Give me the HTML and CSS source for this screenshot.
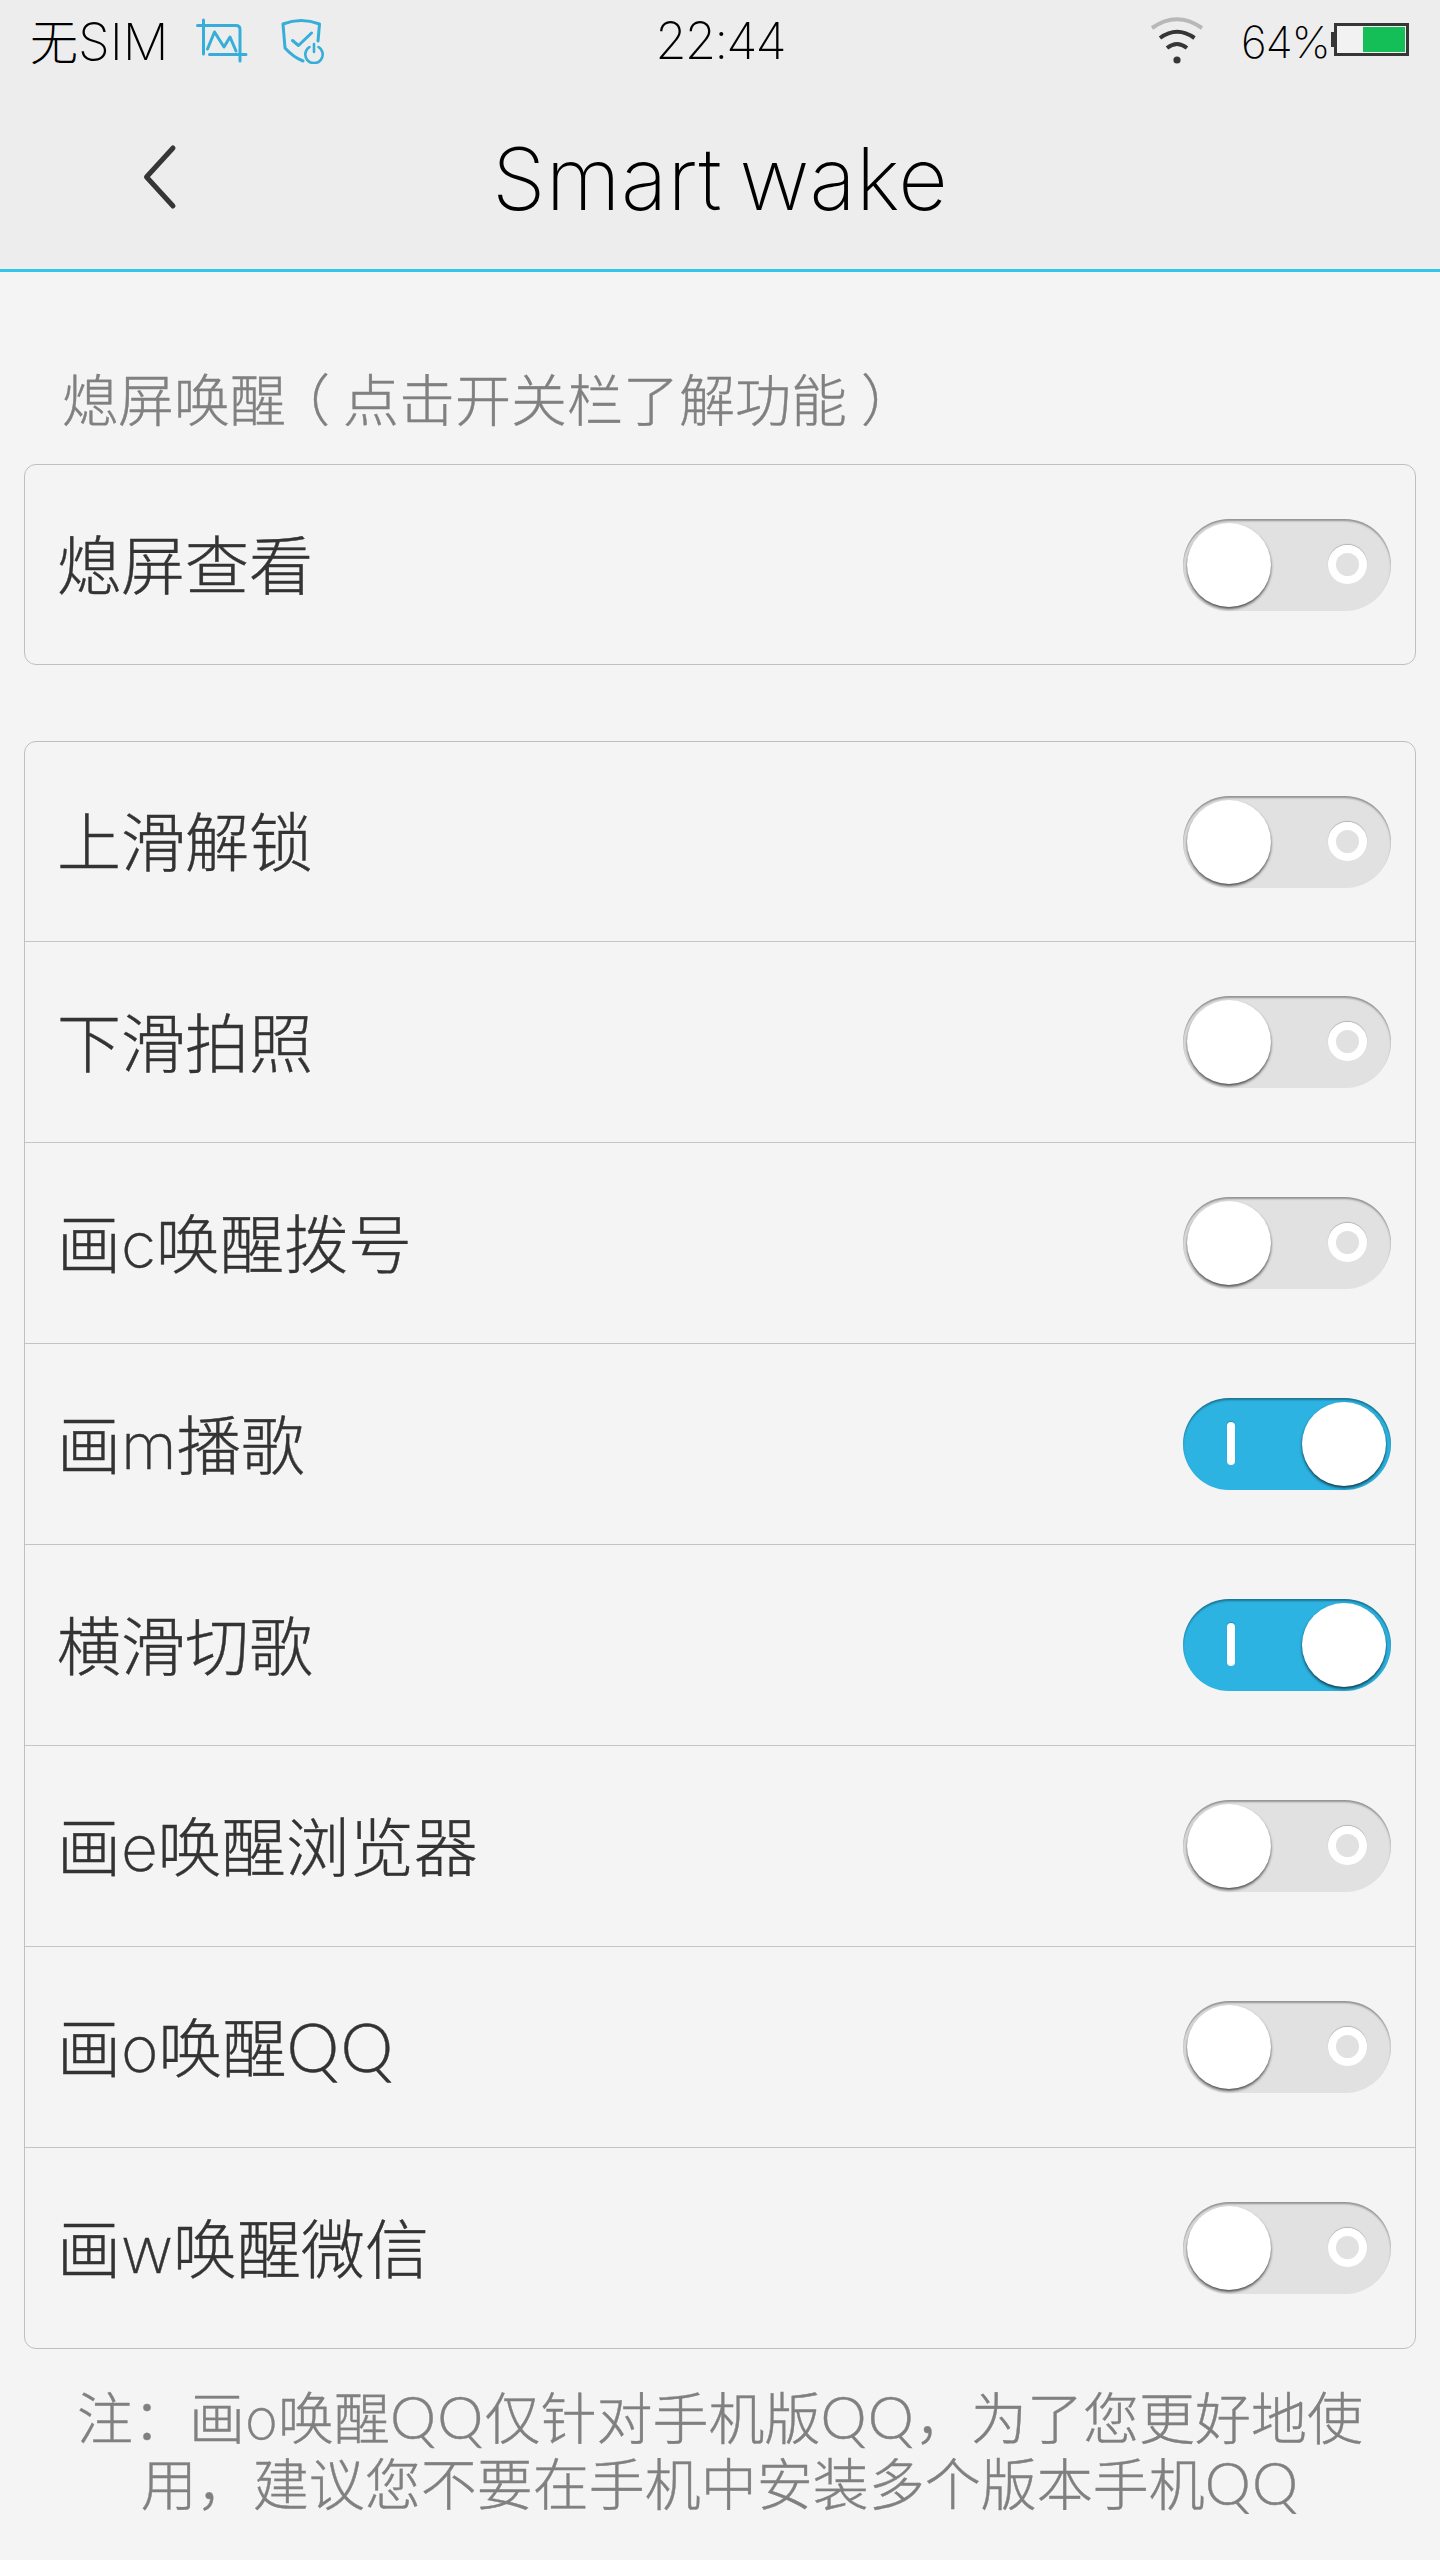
FILE: index.html
```html
<!DOCTYPE html>
<html lang="zh-CN">
<head>
  <meta charset="UTF-8">
  <meta name="viewport" content="width=device-width, initial-scale=1.0">
  <link rel="stylesheet" href="styles.css">
  <title>Smart wake</title>
</head>
<body>

<header class="header">
  <div class="status">
    <div class="status-left">
      <span class="carrier">无<span class="sim">SIM</span></span>
      <svg class="icon-crop" width="52" height="46" viewBox="0 0 52 46" fill="none" stroke="#37aeda" stroke-width="3" stroke-linecap="round" stroke-linejoin="round">
        <path d="M1.500 7.500H40q4 0 4 4V43M7.500 2V36M13.500 36.500H50M11.500 31L18.500 14L28 29L34 19L40 33"/>
      </svg>
      <svg class="icon-shield" width="44" height="46" viewBox="0 0 44 46" fill="none" stroke="#37aeda" stroke-width="3" stroke-linecap="round" stroke-linejoin="round">
        <path d="M37 23L38.500 6Q20 -1 2 6L4 30Q12 39 22 43M11.500 22.500L17.500 27.500L30.500 15"/>
        <path d="M28.500 29A8.700 8.700 0 1 0 37.500 29M33 26V34" stroke-width="2.600"/>
      </svg>
    </div>
    <div class="clock">22:44</div>
    <div class="status-right">
      <svg class="icon-wifi" width="54" height="48" viewBox="0 0 54 48" fill="none" stroke="#363636" stroke-width="4">
        <path d="M2 11Q27 -6.500 52 11" stroke="#b8b8b8"/>
        <path d="M10 21Q27 8.500 44.500 21M17 31Q27 23 37 31"/>
        <circle cx="27" cy="43" r="3.600" fill="#363636" stroke="none"/>
      </svg>
      <span class="percent">64%</span>
      <svg class="icon-battery" width="79" height="34" viewBox="0 0 79 34">
        <path d="M0 9H5V24H0z" fill="#363636"/>
        <rect x="4.500" y="1.500" width="72" height="30" fill="#f2f2f2" stroke="#363636" stroke-width="3"/>
        <path d="M32 4H74V29H32z" fill="#14bf58"/>
      </svg>
    </div>
  </div>
  <div class="titlebar">
    <svg class="back" width="36" height="66" viewBox="0 0 36 66" fill="none" stroke="#363636" stroke-width="5" stroke-linecap="round" stroke-linejoin="round">
      <path d="M32 4L5.500 33L32 62"/>
    </svg>
    <h1 class="title">Smart wake</h1>
  </div>
</header>

<main class="content">
  <h2 class="section">熄屏唤醒<span class="paren-open">（</span>点击开关栏了解功能<span class="paren-close">）</span></h2>

  <div class="card">
    <div class="row"><span>熄屏查看</span><i class="switch"></i></div>
  </div>

  <div class="card">
    <div class="row"><span>上滑解锁</span><i class="switch"></i></div>
    <div class="row"><span>下滑拍照</span><i class="switch"></i></div>
    <div class="row"><span>画<b>c</b>唤醒拨号</span><i class="switch"></i></div>
    <div class="row"><span>画<b>m</b>播歌</span><i class="switch on"></i></div>
    <div class="row"><span>横滑切歌</span><i class="switch on"></i></div>
    <div class="row"><span>画<b>e</b>唤醒浏览器</span><i class="switch"></i></div>
    <div class="row"><span>画<b>o</b>唤醒<b class="q">QQ</b></span><i class="switch"></i></div>
    <div class="row"><span>画<b>w</b>唤醒微信</span><i class="switch"></i></div>
  </div>

  <p class="note">注：画<b>o</b>唤醒<b class="q">QQ</b>仅针对手机版<b class="q">QQ</b>，为了您更好地使<br>用，建议您不要在手机中安装多个版本手机<b class="q">QQ</b></p>
</main>

</body>
</html>
```
FILE: styles.css
```css
*,
*::before,
*::after {
  box-sizing: border-box;
}

body {
  margin: 0;
  background: #f4f4f4;
  color: #333;
  font-family: "Noto Sans CJK SC", sans-serif;
  font-weight: 300;
}

.header {
  height: 272px;
  background: #ededed;
  border-bottom: 3px solid #35c5e8;
}

.status {
  display: grid;
  grid-template-columns: 1fr auto 1fr;
  height: 84px;
  padding: 0 30px;
  color: #000;
}

.status-left,
.status-right {
  display: flex;
  align-items: flex-start;
}

.status-right {
  justify-content: flex-end;
}

.carrier {
  width: 166px;
  font-size: 48px;
  line-height: 78px;
  white-space: nowrap;
}

.sim,
.clock,
.percent,
.title,
b {
  font-family: Inter, "Liberation Sans", sans-serif;
  font-weight: 200;
}

b {
  line-height: 1;
  font-weight: 250;
}

.q {
  font-family: Lato, Inter, sans-serif;
  font-size: 1.04em;
  font-weight: 300;
  letter-spacing: 0.02em;
}

.sim {
  font-size: 51px;
  line-height: 1;
}

.clock {
  font-size: 51px;
  line-height: 81px;
  letter-spacing: -2px;
}

.percent {
  width: 90px;
  margin-left: 37px;
  font-size: 44px;
  line-height: 84px;
  letter-spacing: -1px;
}

.icon-crop {
  margin-top: 18px;
}

.icon-shield {
  margin: 18px 0 0 33px;
}

.icon-wifi {
  margin-top: 17px;
}

.icon-battery {
  margin-top: 23px;
}

.titlebar {
  display: grid;
  grid-template-columns: 1fr auto 1fr;
  align-items: center;
  height: 186px;
}

.back {
  margin: -1px 0 0 141px;
}

.title {
  margin: 3px 0 0;
  color: #000;
  font-size: 86px;
  font-weight: 230;
  line-height: 100px;
  letter-spacing: 0.3px;
  word-spacing: -7px;
}

.content {
  padding: 87px 24px 0;
}

.section {
  margin: 0 0 29px;
  padding-left: 38px;
  color: #808080;
  font-size: 56px;
  font-weight: 300;
  line-height: 76px;
}

.section,
.row,
.note {
  -webkit-text-stroke: 0.4px currentColor;
}

.paren-open,
.paren-close {
  font-feature-settings: "halt";
}

.paren-open {
  margin: 0 13px 0 16px;
}

.paren-close {
  margin-left: 14px;
}

.card {
  margin-bottom: 76px;
  border: 1px solid #bfbfbf;
  border-radius: 12px;
}

.row {
  display: flex;
  justify-content: space-between;
  align-items: center;
  height: 201px;
  padding: 0 24px 0 32px;
  border-top: 1px solid #c4c4c4;
  font-size: 64px;
  line-height: 90px;
}

.row span {
  padding-bottom: 7px;
}

.row:first-child {
  height: 199px;
  border-top: none;
}

.switch {
  position: relative;
  width: 208px;
  height: 92px;
  border-radius: 46px;
  background: #e1e1e1;
  box-shadow: inset 0 2px 2px rgba(0, 0, 0, 0.35);
}

/* knob */
.switch::before {
  content: "";
  position: absolute;
  top: 4px;
  left: 4px;
  width: 84px;
  height: 84px;
  border-radius: 50%;
  background: #fff;
  box-shadow: 0 2px 3px rgba(0, 0, 0, 0.65);
}

/* off mark */
.switch::after {
  content: "";
  position: absolute;
  top: 26px;
  left: 145px;
  width: 39px;
  height: 39px;
  border: 8px solid #fff;
  border-radius: 50%;
  box-shadow: 0 -1px 1px rgba(0, 0, 0, 0.2);
}

.switch.on {
  background: #2cb3e1;
}

.switch.on::before {
  left: 119px;
}

.switch.on::after {
  top: 24px;
  left: 44px;
  width: 8px;
  height: 43px;
  border: none;
  border-radius: 4px;
  background: #fff;
}

.note {
  margin: -43px 0 0;
  color: #808080;
  font-size: 56px;
  line-height: 66px;
  text-align: center;
  white-space: nowrap;
}
```
